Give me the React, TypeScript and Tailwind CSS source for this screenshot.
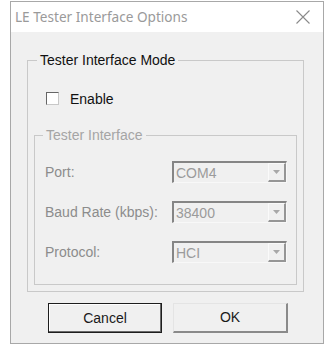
import React from "react";

function Combo({ value }: { value: string }) {
  return (
    <div className="w-[115px] h-[22px] flex border-t-2 border-l-2 border-t-[#858585] border-l-[#858585] border-b border-r border-b-[#f8f8f8] border-r-[#f8f8f8] bg-[#f0f0f0]">
      <div className="flex-1 flex items-center pl-[2px] text-[14px] text-[#9b9b9b] leading-none">{value}</div>
      <div className="w-[18px] h-full flex items-center justify-center border-t border-l border-t-[#fafafa] border-l-[#fafafa] border-r-2 border-b-2 border-r-[#969696] border-b-[#969696] bg-[#f0f0f0]">
        <svg width="7" height="4" viewBox="0 0 7 4">
          <path d="M0 0 L7 0 L3.5 4 Z" fill="#a8a8a8" />
        </svg>
      </div>
    </div>
  );
}

export default function App() {
  return (
    <div className="w-[330px] h-[347px] bg-white pt-[1px] pl-[10px] font-['Liberation_Sans',Arial,sans-serif]">
      <div className="w-[314px] h-[343px] border border-[#a8a8a8] flex flex-col bg-[#f0f0f0]">
        <div className="h-[30px] shrink-0 bg-white flex items-center justify-between pl-[4px] pr-[13px]">
          <span className="font-['Noto_Sans',sans-serif] text-[13.6px] text-[#9a9a9a] leading-none">
            LE Tester Interface Options
          </span>
          <svg width="14" height="14" viewBox="0 0 14 14">
            <path d="M0.5 0.5 L13.5 13.5 M13.5 0.5 L0.5 13.5" stroke="#8a8a8a" strokeWidth="1.1" />
          </svg>
        </div>
        <div className="flex-1 pl-[16px] pt-[20px]">
          <fieldset className="w-[277px] h-[240px] border border-[#c9c9c9]">
            <legend className="ml-[9px] px-[3px] text-[14px] leading-[16px] text-[#111]">
              Tester Interface Mode
            </legend>
            <div className="mt-[24px] ml-[18px] flex items-center h-[13px]">
              <div className="w-[13px] h-[13px] border border-t-[#666] border-l-[#666] border-b-[#c8c8c8] border-r-[#c8c8c8] bg-white" />
              <span className="ml-[11px] text-[14px] text-[#111] leading-none">Enable</span>
            </div>
            <fieldset className="mt-[22px] ml-[6px] w-[263px] h-[158px] border border-[#c9c9c9]">
              <legend className="ml-[8px] px-[3px] text-[14px] leading-[16px] text-[#a5a5a5]">
                Tester Interface
              </legend>
              <div className="pl-[10px] pt-[18px] grid grid-cols-[127px_115px] gap-y-[18px] items-center">
                <span className="text-[14px] text-[#8c8c8c]">Port:</span>
                <Combo value="COM4" />
                <span className="text-[14px] text-[#8c8c8c]">Baud Rate (kbps):</span>
                <Combo value="38400" />
                <span className="text-[14px] text-[#8c8c8c]">Protocol:</span>
                <Combo value="HCI" />
              </div>
            </fieldset>
          </fieldset>
          <div className="mt-[11px] ml-[21px] flex gap-[11px]">
            <button className="w-[114px] h-[30px] border border-[#1e1e1e] bg-[#f0f0f0] text-[14px] text-[#1a1a1a] shadow-[inset_-1px_-1px_0_#6a6a6a,inset_1px_1px_0_#ffffff]">
              Cancel
            </button>
            <button className="w-[115px] h-[30px] border-t border-l border-t-[#e4e4e4] border-l-[#e4e4e4] border-r-2 border-b-2 border-r-[#8a8a8a] border-b-[#8a8a8a] bg-[#f0f0f0] text-[14px] text-[#1a1a1a]">
              OK
            </button>
          </div>
        </div>
      </div>
    </div>
  );
}
